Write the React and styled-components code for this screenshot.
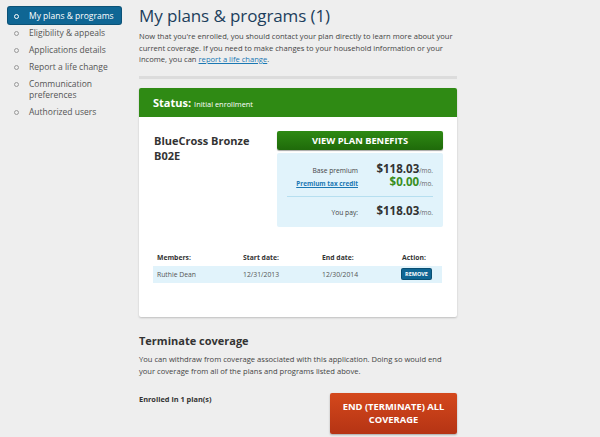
import React from 'react'
import styled, { createGlobalStyle } from 'styled-components'

const GlobalStyle = createGlobalStyle`
  html, body {
    margin: 0;
    padding: 0;
    background: #eeeeee;
    font-family: "Open Sans", "DejaVu Sans", sans-serif;
    color: #444;
  }
`

const nav = [
  'My plans & programs',
  'Eligibility & appeals',
  'Applications details',
  'Report a life change',
  'Communication preferences',
  'Authorized users',
]

const members = [
  { name: 'Ruthie Dean', start: '12/31/2013', end: '12/30/2014' },
]

export default function App() {
  return (
    <>
      <GlobalStyle />
      <Page>
        <Sidebar>
          {nav.map((item, i) => (
            <NavItem key={item} active={i === 0}>
              <Bullet active={i === 0} />
              <NavLabel>{item}</NavLabel>
            </NavItem>
          ))}
        </Sidebar>
        <Main>
          <Title>My plans &amp; programs (1)</Title>
          <Intro>
            Now that you're enrolled, you should contact your plan directly to learn more about your
            current coverage. If you need to make changes to your household information or your
            income, you can <Link href="#">report a life change</Link>.
          </Intro>
          <Divider />
          <Card>
            <CardHeader>
              <StatusLabel>Status:</StatusLabel>
              <StatusValue>Initial enrollment</StatusValue>
            </CardHeader>
            <CardBody>
              <PlanRow>
                <PlanName>BlueCross Bronze B02E</PlanName>
                <PlanSide>
                  <GreenButton>VIEW PLAN BENEFITS</GreenButton>
                  <CostBox>
                    <CostRow>
                      <CostLabel>Base premium</CostLabel>
                      <Price>$118.03<Per>/mo.</Per></Price>
                    </CostRow>
                    <CostRow>
                      <CostLabel as="a" href="#" link>Premium tax credit</CostLabel>
                      <Price green>$0.00<Per>/mo.</Per></Price>
                    </CostRow>
                    <CostRule />
                    <CostRow>
                      <CostLabel>You pay:</CostLabel>
                      <Price>$118.03<Per>/mo.</Per></Price>
                    </CostRow>
                  </CostBox>
                </PlanSide>
              </PlanRow>
              <Table>
                <colgroup>
                  <col width="86" />
                  <col width="79" />
                  <col width="80" />
                  <col />
                </colgroup>
                <thead>
                  <tr>
                    <Th>Members:</Th>
                    <Th>Start date:</Th>
                    <Th>End date:</Th>
                    <Th>Action:</Th>
                  </tr>
                </thead>
                <tbody>
                  {members.map(m => (
                    <Tr key={m.name}>
                      <Td>{m.name}</Td>
                      <Td>{m.start}</Td>
                      <Td>{m.end}</Td>
                      <Td><RemoveButton>REMOVE</RemoveButton></Td>
                    </Tr>
                  ))}
                </tbody>
              </Table>
            </CardBody>
          </Card>
          <SectionTitle>Terminate coverage</SectionTitle>
          <SectionText>
            You can withdraw from coverage associated with this application. Doing so would end
            your coverage from all of the plans and programs listed above.
          </SectionText>
          <TerminateRow>
            <Enrolled>Enrolled in 1 plan(s)</Enrolled>
            <RedButton>END (TERMINATE) ALL<br />COVERAGE</RedButton>
          </TerminateRow>
        </Main>
      </Page>
    </>
  )
}

const Page = styled.div`
  display: flex;
  align-items: flex-start;
  width: 600px;
  height: 437px;
  overflow: hidden;
`

const Sidebar = styled.ul`
  list-style: none;
  margin: 7px 0 0 8px;
  padding: 0;
  width: 113px;
  flex-shrink: 0;
`

const NavItem = styled.li`
  display: flex;
  align-items: flex-start;
  padding: 3px 0 3px 6px;
  border-radius: 2px;
  background: ${p => (p.active ? '#0f6694' : 'transparent')};
  color: ${p => (p.active ? '#fff' : '#555')};
  box-shadow: ${p => (p.active ? '0 0 0 1px #0b5277' : 'none')};
`

const Bullet = styled.span`
  flex-shrink: 0;
  width: 3px;
  height: 3px;
  margin-top: 4px;
  border-radius: 50%;
  border: 1px solid ${p => (p.active ? '#fff' : '#999')};
`

const NavLabel = styled.span`
  margin-left: 10px;
  font-size: 8.5px;
  line-height: 11px;
  width: 92px;
`

const Main = styled.main`
  margin-left: 18px;
  width: 318px;
  flex-shrink: 0;
`

const Title = styled.h1`
  margin: 4px 0 0;
  font-weight: 400;
  font-size: 17px;
  letter-spacing: -0.1px;
  line-height: 24px;
  color: #1c3e5c;
`

const Intro = styled.p`
  margin: 3px 0 0;
  font-size: 7.6px;
  line-height: 11.5px;
  color: #444;
`

const Link = styled.a`
  color: #1b78b3;
  text-decoration: underline;
`

const Divider = styled.div`
  height: 3px;
  background: #dcdcdc;
  margin-top: 10px;
`

const Card = styled.section`
  margin-top: 9px;
  background: #fff;
  border-radius: 2px;
  box-shadow: 0 1px 2px rgba(0, 0, 0, 0.2);
  overflow: hidden;
`

const CardHeader = styled.div`
  display: flex;
  align-items: baseline;
  gap: 3px;
  height: 29px;
  padding: 0 14px;
  background: #2f8a14;
  color: #fff;
  line-height: 29px;
`

const StatusLabel = styled.span`
  font-size: 11px;
  font-weight: 700;
`

const StatusValue = styled.span`
  font-size: 7.4px;
`

const CardBody = styled.div`
  padding: 14px 14px 34px;
`

const PlanRow = styled.div`
  display: flex;
  justify-content: space-between;
`

const PlanName = styled.h2`
  margin: 2px 0 0 1px;
  width: 115px;
  font-size: 11px;
  line-height: 15px;
  font-weight: 700;
  color: #333;
`

const PlanSide = styled.div`
  width: 166px;
`

const GreenButton = styled.button`
  display: block;
  width: 100%;
  height: 19px;
  border: 0;
  border-radius: 2px;
  background: linear-gradient(#2e8a13, #1f6a0a);
  box-shadow: 0 1px 1px rgba(0, 0, 0, 0.35);
  color: #fff;
  font-family: inherit;
  font-size: 9.3px;
  font-weight: 700;
  padding: 0;
`

const CostBox = styled.div`
  margin-top: 3px;
  background: #e1f3fb;
  border-radius: 2px;
  padding: 9px 10px 10px;
`

const CostRow = styled.div`
  display: flex;
  align-items: baseline;
  justify-content: flex-end;
  gap: 15px;
  height: 13px;
  line-height: 13px;
`

const CostLabel = styled.span`
  font-size: ${p => (p.link ? '6.4px' : '6.7px')};
  color: ${p => (p.link ? '#1b78b3' : '#444')};
  text-decoration: ${p => (p.link ? 'underline' : 'none')};
  font-weight: ${p => (p.link ? 700 : 400)};
`

const Price = styled.span`
  width: 60px;
  text-align: right;
  font-size: 11.5px;
  font-weight: 700;
  color: ${p => (p.green ? '#3a8f1f' : '#333')};
`

const Per = styled.span`
  font-size: 6.4px;
  font-weight: 400;
  color: #666;
`

const CostRule = styled.div`
  height: 1px;
  background: #b6dff0;
  margin: 8px 0 7px;
`

const Table = styled.table`
  width: 289px;
  margin-top: 26px;
  border-collapse: collapse;
  table-layout: fixed;
  font-size: 6.8px;
`

const Th = styled.th`
  text-align: left;
  font-weight: 700;
  color: #333;
  padding: 0 4px 4px;
`

const Tr = styled.tr`
  background: #e1f3fb;
`

const Td = styled.td`
  height: 17px;
  padding: 0 4px;
  color: #555;
`

const RemoveButton = styled.span`
  display: inline-block;
  background: #0f6694;
  color: #fff;
  font-size: 5.5px;
  font-weight: 700;
  line-height: 8px;
  padding: 1px 3px;
  border-radius: 1px;
  box-shadow: 0 0 0 1px #0a4f72;
`

const SectionTitle = styled.h2`
  margin: 16px 0 0;
  font-size: 11px;
  font-weight: 700;
  line-height: 16px;
  color: #333;
`

const SectionText = styled.p`
  margin: 4px 0 0;
  font-size: 7.6px;
  line-height: 12px;
  color: #444;
`

const TerminateRow = styled.div`
  display: flex;
  justify-content: space-between;
  align-items: flex-start;
  margin-top: 16px;
`

const Enrolled = styled.span`
  margin-top: 1px;
  font-size: 7.4px;
  font-weight: 700;
  color: #333;
`

const RedButton = styled.button`
  width: 127px;
  height: 41px;
  border: 0;
  border-radius: 2px;
  background: linear-gradient(#d4481c, #b53414);
  box-shadow: 0 1px 2px rgba(0, 0, 0, 0.3);
  color: #fff;
  font-family: inherit;
  font-size: 9.4px;
  font-weight: 700;
  line-height: 13px;
  padding: 0;
`
